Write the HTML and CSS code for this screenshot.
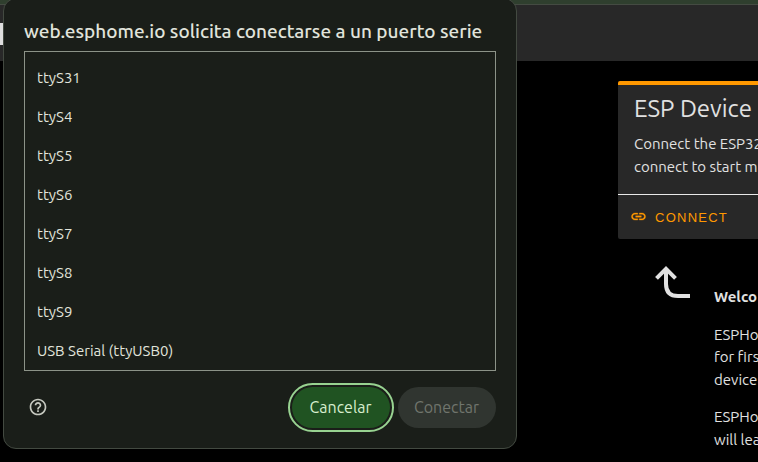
FILE: index.html
```html
<!DOCTYPE html>
<html lang="es">
<head>
<meta charset="utf-8">
<title>ESPHome Web</title>
<link rel="stylesheet" href="styles.css">
</head>
<body>
<div class="toolbar"></div>
<header class="header"><span class="logo"></span></header>
<main class="content" lang="en">
  <section class="card">
    <div class="card-body">
      <h2 class="card-title">ESP Device</h2>
      <p class="card-text">Connect the ESP32<br>connect to start m</p>
    </div>
    <div class="card-actions">
      <svg class="link-icon" viewBox="0 0 24 24"><path d="M3.9 12c0-1.71 1.39-3.1 3.1-3.1h4V7H7c-2.76 0-5 2.24-5 5s2.24 5 5 5h4v-1.9H7c-1.71 0-3.1-1.39-3.1-3.1zM8 13h8v-2H8v2zm9-6h-4v1.9h4c1.71 0 3.1 1.39 3.1 3.1s-1.39 3.1-3.1 3.1h-4V17h4c2.76 0 5-2.24 5-5s-2.24-5-5-5z"/></svg>
      <span class="connect">CONNECT</span>
    </div>
  </section>
  <section class="intro">
    <svg class="arrow" viewBox="0 0 36 36"><path d="M12 5v15q0 12 12 12H36M2.500 14.300L12 4.800l9.500 9.500"/></svg>
    <div class="intro-text">
      <p><b>Welco</b></p>
      <p>ESPHo<br>for firs<br>device</p>
      <p>ESPHo<br>will lea</p>
    </div>
  </section>
</main>
<div class="dialog" role="dialog">
  <h1 class="dialog-title">web.esphome.io solicita conectarse a un puerto serie</h1>
  <ul class="ports">
    <li>ttyS31</li>
    <li>ttyS4</li>
    <li>ttyS5</li>
    <li>ttyS6</li>
    <li>ttyS7</li>
    <li>ttyS8</li>
    <li>ttyS9</li>
    <li>USB Serial (ttyUSB0)</li>
  </ul>
  <div class="dialog-actions">
    <svg class="help" viewBox="0 0 24 24"><path d="M11 18h2v-2h-2v2zm1-16C6.480 2 2 6.480 2 12s4.480 10 10 10 10-4.480 10-10S17.520 2 12 2zm0 18c-4.410 0-8-3.590-8-8s3.590-8 8-8 8 3.590 8 8-3.590 8-8 8zm0-14c-2.210 0-4 1.790-4 4h2c0-1.100.9-2 2-2s2 .9 2 2c0 2-3 1.750-3 5h2c0-2.250 3-2.500 3-5 0-2.210-1.790-4-4-4z"/></svg>
    <button class="btn cancel">Cancelar</button>
    <button class="btn connect-btn" disabled>Conectar</button>
  </div>
</div>
</body>
</html>
```
FILE: styles.css
```css
* { box-sizing: border-box; }
body {
  margin: 0;
  width: 758px;
  height: 462px;
  overflow: hidden;
  background: #000;
  color: #e1e1e1;
  font-family: Ubuntu, "Noto Sans", sans-serif;
  font-size: 15px;
}
h1, h2, p, ul { margin: 0; padding: 0; }
.toolbar { height: 5px; background: #2f3f2e; border-bottom: 1px solid #444b42; }
.header { height: 56px; padding-top: 18px; background: #282828; }
.logo { display: block; width: 10px; height: 22px; background: #dedede; }
.content { height: 401px; padding: 20px 0 0 618px; overflow: hidden; white-space: nowrap; }
.card {
  height: 158px;
  overflow: hidden;
  border-top: 4px solid #ff9800;
  border-radius: 2px 0 0 2px;
  background: #282828;
}
.card-body { height: 109px; padding: 8px 0 0 16px; }
.card-title { font-size: 24px; font-weight: 400; line-height: 32px; }
.card-text { margin-top: 7px; overflow: hidden; line-height: 23px; }
.card-actions {
  display: flex;
  align-items: center;
  gap: 8px;
  height: 45px;
  padding: 0 0 1px 12px;
  border-top: 1px solid #e8e8e8;
  color: #ff9800;
}
.link-icon { width: 17px; height: 17px; fill: currentColor; stroke: currentColor; stroke-width: .4; }
.connect { padding-top: 1px; font-family: "Liberation Sans", sans-serif; font-size: 13px; letter-spacing: 1.25px; }
.intro { display: flex; margin: 25px 0 0 36px; }
.arrow { flex: none; width: 36px; height: 36px; fill: none; stroke: #e1e1e1; stroke-width: 4; }
.intro-text { overflow: hidden; padding: 22px 0 0 24px; line-height: 22.500px; }
.intro-text p { margin-bottom: 15px; }
.dialog {
  position: absolute;
  top: -2px;
  left: 3px;
  width: 514px;
  height: 451px;
  padding: 19px 20px 0;
  border: 1px solid #434a41;
  border-radius: 13px;
  background: #1a1e19;
  color: #e1e4dc;
}
.dialog-title { height: 33px; font-size: 19px; font-weight: 500; line-height: 27px; white-space: nowrap; }
.ports {
  width: 472px;
  height: 320px;
  padding: 6px 12px 0;
  border: 1px solid #8c9388;
  list-style: none;
}
.ports li { height: 39px; line-height: 39px; }
.dialog-actions { display: flex; align-items: center; width: 472px; padding-top: 16px; }
.help { width: 20px; height: 20px; margin: 0 auto 1px 4px; fill: #c6c9c0; }
.btn {
  width: 98px;
  height: 41px;
  padding: 0 1px 2px 0;
  border: 0;
  border-radius: 21px;
  font-family: inherit;
  font-size: 16px;
}
.cancel {
  margin-right: 8px;
  background: #205322;
  color: #d8efcf;
  outline: 2px solid #98d391;
  outline-offset: 2px;
}
.connect-btn { background: #303530; color: #70756d; }
```
